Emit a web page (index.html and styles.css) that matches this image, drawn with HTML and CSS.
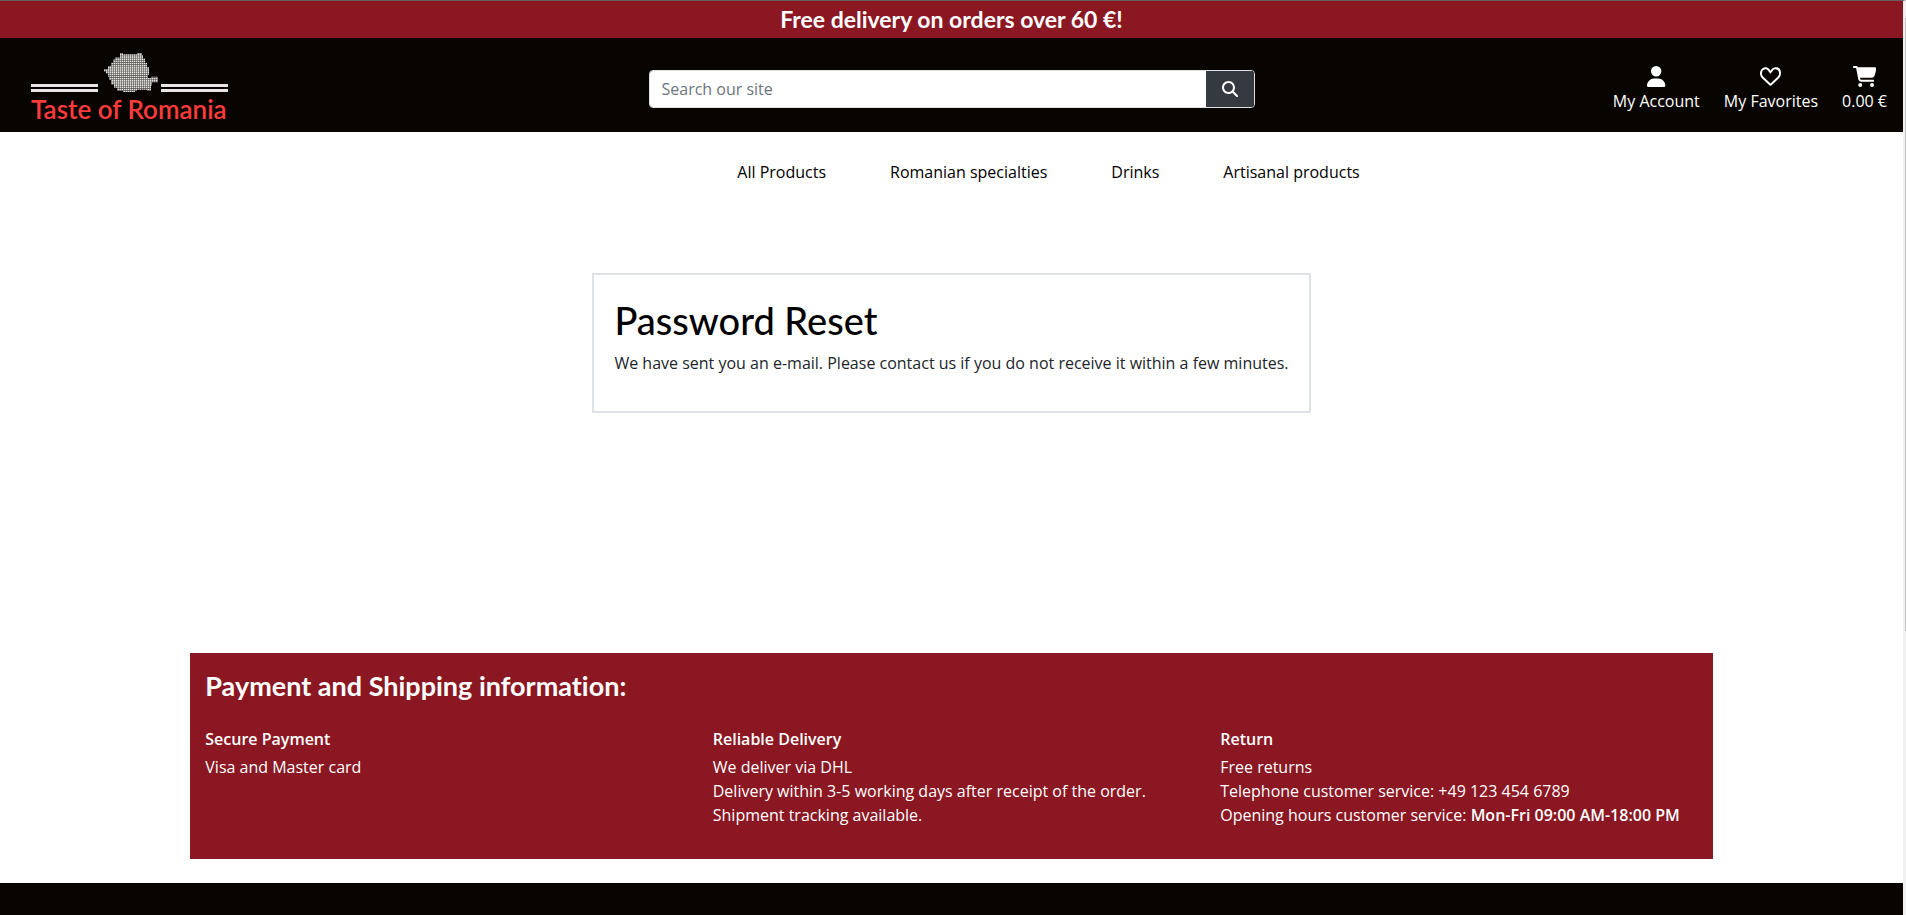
FILE: index.html
```html
<!DOCTYPE html>
<html lang="en">
<head>
<meta charset="utf-8">
<title>Taste of Romania</title>
<link rel="stylesheet" href="styles.css">
</head>
<body>
<div class="page">
  <div class="banner">Free delivery on orders over 60 €!</div>
  <header class="header">
    <a class="logo" href="#" aria-label="Taste of Romania">
      <span class="logo-art">
        <span class="logo-bars"></span>
        <svg class="logo-map" viewBox="0 0 56 37" preserveAspectRatio="none" aria-hidden="true">
          <defs>
            <pattern id="dots" width="2" height="2" patternUnits="userSpaceOnUse">
              <rect width="2" height="2" fill="#55534f"/>
              <rect width="1.4" height="1.4" fill="#e4e4e2"/>
            </pattern>
          </defs>
          <path fill="url(#dots)" d="M18 1h3v1h14v-1h5v2h1v3h2v4h2v4h2v7h-1v3h3v-1h7v5h-6v3h-1v5h-4v-1h-10v1h-2v2h-6v-1h-2v1h-4v-2h-6v-3h-3v-3h-3v-4h-2v-3h-1v-3h-2v-2h-2v-2h4v-3h3v-3h2v-3h2v-2h5z"/>
        </svg>
        <span class="logo-bars"></span>
      </span>
      <span class="logo-text">Taste of Romania</span>
    </a>
    <form class="search">
      <input class="search-input" type="text" placeholder="Search our site" aria-label="Search our site">
      <button class="search-button" type="button" aria-label="Search">
        <svg width="16" height="16" viewBox="0 0 512 512" fill="currentColor" aria-hidden="true"><path d="M416 208c0 46-15 88-40 123l127 126c12 13 12 33 0 46s-33 12-46 0L331 376c-35 25-77 40-123 40C93 416 0 323 0 208S93 0 208 0s208 93 208 208zM208 352a144 144 0 1 0 0-288 144 144 0 1 0 0 288z"/></svg>
      </button>
    </form>
    <nav class="user-links" aria-label="Account">
      <a class="user-link" href="#">
        <svg height="21" viewBox="0 0 448 512" fill="currentColor" aria-hidden="true"><path d="M224 256a128 128 0 1 0 0-256 128 128 0 1 0 0 256zm-46 48C80 304 0 384 0 482c0 16 14 30 30 30h388c16 0 30-14 30-30 0-98-80-178-178-178z"/></svg>
        <span>My Account</span>
      </a>
      <a class="user-link" href="#">
        <svg height="21" viewBox="0 0 512 512" fill="currentColor" aria-hidden="true"><path d="M225 76l31 37 31-37c34-36 83-52 131-44 70 12 94 72 94 141v6c0 45-18 86-50 117L276 474c-11 10-29 10-40 0L48 300C17 269 0 228 0 185v-12C0 104 50 44 119 32c39-6 78 8 106 44zm31 112l-65-81c-16-22-41-31-66-26-45 7-77 46-77 92v12c0 30 12 58 34 78l174 161 174-161c22-20 34-48 34-78v-12c0-46-32-85-77-92-25-5-50 4-66 22z"/></svg>
        <span>My Favorites</span>
      </a>
      <a class="user-link" href="#">
        <svg height="21" viewBox="0 0 576 512" fill="currentColor" aria-hidden="true"><path d="M0 24C0 11 11 0 24 0h46c21 0 41 13 50 32h411c26 0 45 25 38 50l-41 152c-8 32-37 54-70 54H171l5 29c2 11 12 19 24 19h288c13 0 24 11 24 24s-11 24-24 24H200c-35 0-65-25-71-58L77 55c-1-4-4-7-8-7H24C11 48 0 37 0 24zm128 440a48 48 0 1 1 96 0 48 48 0 1 1-96 0zm336-48a48 48 0 1 1 0 96 48 48 0 1 1 0-96z"/></svg>
        <span>0.00 €</span>
      </a>
    </nav>
  </header>
  <nav class="main-nav" aria-label="Main">
    <a href="#">All Products</a>
    <a href="#">Romanian specialties</a>
    <a href="#">Drinks</a>
    <a href="#">Artisanal products</a>
  </nav>
  <main class="content">
    <section class="card">
      <h1>Password Reset</h1>
      <p>We have sent you an e-mail. Please contact us if you do not receive it within a few minutes.</p>
    </section>
  </main>
  <section class="info">
    <h2>Payment and Shipping information:</h2>
    <div class="info-columns">
      <div>
        <h3>Secure Payment</h3>
        <p>Visa and Master card</p>
      </div>
      <div>
        <h3>Reliable Delivery</h3>
        <p>We deliver via DHL</p>
        <p>Delivery within 3-5 working days after receipt of the order.</p>
        <p>Shipment tracking available.</p>
      </div>
      <div>
        <h3>Return</h3>
        <p>Free returns</p>
        <p>Telephone customer service: +49 123 454 6789</p>
        <p>Opening hours customer service: <strong>Mon-Fri 09:00 AM-18:00 PM</strong></p>
      </div>
    </div>
  </section>
  <footer class="footer"></footer>
</div>
<div class="scroll-thumb"></div>
</body>
</html>
```
FILE: styles.css
```css
* {
  box-sizing: border-box;
}

body {
  margin: 0;
  font: 16px/24px "Open Sans", "Noto Sans", sans-serif;
  color: #000;
  background: #fff;
}

h1, h2, h3, p {
  margin: 0;
}

a {
  color: inherit;
  text-decoration: none;
}

.page {
  display: flex;
  flex-direction: column;
  height: 100vh;
  overflow: hidden;
  border-top: 1px solid #66605f;
  border-right: 3px solid #f1f1f1;
}

.scroll-thumb {
  position: absolute;
  top: 18px;
  right: 0;
  width: 1px;
  height: 67%;
  background: #c1c1c1;
}

.banner {
  padding: 4px 0 5px;
  background: #8a1722;
  color: #fff;
  font: 700 23px/28px Lato, sans-serif;
  text-align: center;
}

.header {
  display: grid;
  grid-template-columns: 1fr 606px 1fr;
  align-items: center;
  height: 94px;
  padding: 8px 16px 0;
  background: #080500;
  color: #fff;
}

.logo {
  display: flex;
  flex-direction: column;
  width: 197px;
  margin-left: 15px;
}

.logo-art {
  display: flex;
  align-items: flex-end;
  justify-content: space-between;
}

.logo-bars {
  width: 67px;
  height: 8px;
  border: solid #e8e4e8;
  border-width: 3px 0;
}

.logo-map {
  width: 56px;
  height: 40px;
}

.logo-text {
  color: #ff3b3b;
  font: 600 26px/34px Lato, sans-serif;
  white-space: nowrap;
}

.search {
  display: flex;
  height: 38px;
  border: 1px solid #dee2e6;
  border-radius: 4px;
  overflow: hidden;
}

.search-input {
  flex: 1;
  padding: 0 12px;
  border: 0;
  font: inherit;
}

.search-input::placeholder {
  color: #6c757d;
}

.search-button {
  display: flex;
  align-items: center;
  justify-content: center;
  width: 48px;
  padding: 0;
  border: 0;
  background: #343a40;
  color: #fff;
}

.user-links {
  display: flex;
  justify-content: flex-end;
  gap: 24px;
}

.user-link {
  display: flex;
  flex-direction: column;
  align-items: center;
  gap: 2px;
}

.main-nav {
  display: flex;
  justify-content: center;
  gap: 64px;
  padding: 28px 0 28px 194px;
  font-weight: 500;
}

.content {
  flex: 1;
  display: flex;
  align-items: flex-start;
  justify-content: center;
  padding-top: 61px;
}

.card {
  padding: 22px 20px 36px;
  border: 2px solid #dee2e6;
}

.card h1 {
  margin-bottom: 8px;
  font: 500 38px/46px Lato, sans-serif;
}

.card p {
  color: #212529;
}

.info {
  width: 80%;
  margin: 0 auto 24px;
  padding: 16px 0 32px;
  background: #8a1722;
  color: #fff;
}

.info h2 {
  margin-bottom: 24px;
  padding: 0 15px;
  font: 700 27px/34px Lato, sans-serif;
  font-variant-ligatures: none;
}

.info-columns {
  display: grid;
  grid-template-columns: repeat(3, 1fr);
}

.info-columns > div {
  padding: 0 15px;
}

.info h3 {
  margin-bottom: 4px;
  font-size: 16px;
  font-weight: 600;
  line-height: 24px;
}

.info strong {
  font-weight: 600;
}

.footer {
  flex: 0 0 32px;
  background: #080500;
}
```
